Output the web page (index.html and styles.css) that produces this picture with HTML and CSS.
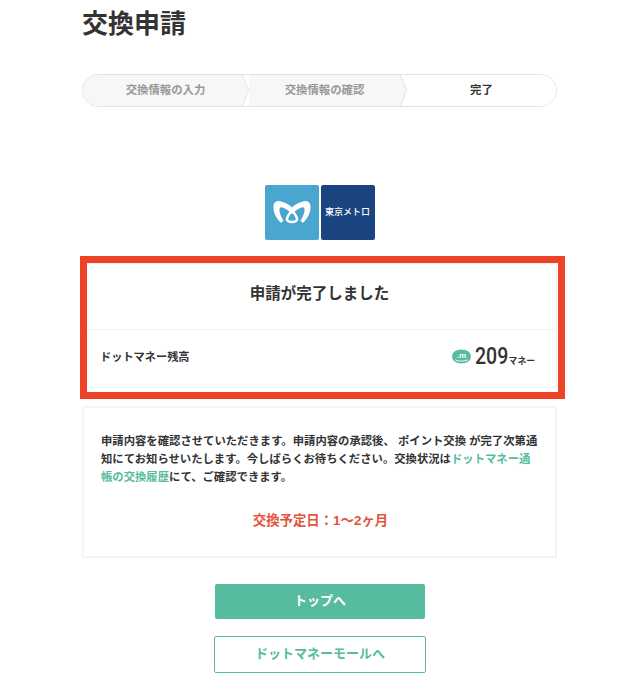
FILE: index.html
```html
<!doctype html>
<html>
<head>
<meta charset="utf-8">
<title>交換申請</title>
<link rel="stylesheet" href="styles.css">
</head>
<body>
<div id="wrap">
	<h1>交換申請</h1>
	<div class="steps">
		<div class="step step_first">交換情報の入力</div>
		<svg class="step_arrow" width="7" height="31" viewBox="0 0 7 31"><polygon points="0,-1 6.5,15.5 0,32" fill="#f7f7f7"/><polyline points="0,-1 6.5,15.500 0,32" fill="none" stroke="#e2e2e2"/></svg>
		<div class="step">交換情報の確認</div>
		<svg class="step_arrow" width="7" height="31" viewBox="0 0 7 31"><polygon points="0,-1 6.5,15.5 0,32" fill="#f7f7f7"/><polyline points="0,-1 6.5,15.500 0,32" fill="none" stroke="#e2e2e2"/></svg>
		<div class="step step_now">完了</div>
	</div>
	<div class="logos">
		<div class="logo logo_mark">
			<svg width="54" height="55" viewBox="0 0 54 55">
				<path d="M16 38C11 33 8 27 8.500 21C8.800 17 11.500 15.500 15 16.200C20 17.200 24.500 19.500 27 22.500C29.500 19.500 34 17.200 39 16.200C42.500 15.500 45.200 17 45.500 21C46 27 43 33 38 38L35.500 35.500C38 32 40 27 39.500 24C39.300 22.500 38 22 36.500 22.500C33.500 23.500 31 25 27 29C23 25 20.500 23.500 17.500 22.500C16 22 14.700 22.500 14.500 24C14 27 16 32 18.500 35.500Z" fill="#fff"/>
				<path d="M27 25.500C24 29 21.500 32 22 34.500C22.500 36.500 25 37 27 37C29 37 31.500 36.500 32 34.500C32.500 32 30 29 27 25.500Z" fill="none" stroke="#fff" stroke-width="2.600"/>
			</svg>
		</div>
		<div class="logo logo_name">東京メトロ</div>
	</div>
	<div class="result">
		<div class="result_title">申請が完了しました</div>
		<div class="result_row">
			<span class="result_label">ドットマネー残高</span>
			<span class="balance">
				<svg class="coin" width="19" height="15" viewBox="0 0 19 15">
					<ellipse cx="9.500" cy="8.500" rx="9.300" ry="6" fill="#57bb9f"/>
					<ellipse cx="9.500" cy="6.500" rx="9.300" ry="6" fill="#57bb9f"/>
					<path d="M3 10.800C7 12.600 12 12.600 16 10.800" fill="none" stroke="#fff" stroke-width="0.900"/>
					<text x="9.500" y="9" text-anchor="middle" class="coin_text">.m</text>
				</svg>
				<span class="balance_num">209</span><span class="balance_unit">マネー</span>
			</span>
		</div>
		<div class="marker"></div>
	</div>
	<div class="notice">
		<p>申請内容を確認させていただきます。申請内容の承認後、 ポイント交換 が完了次第通知にてお知らせいたします。今しばらくお待ちください。交換状況は<a href="#">ドットマネー通帳の交換履歴</a>にて、ご確認できます。</p>
		<p class="notice_date">交換予定日：1〜2ヶ月</p>
	</div>
	<a href="#" class="btn btn_main">トップへ</a>
	<a href="#" class="btn btn_sub">ドットマネーモールへ</a>
</div>
</body>
</html>
```

FILE: styles.css
```css
body,h1,p{margin: 0; padding: 0;}
html,body{background-color: #fff;}
body{
	font-family: "Liberation Sans","Noto Sans CJK JP",sans-serif;
	font-weight: 700;
	color: #333;
}
a{text-decoration: none;}
#wrap{
	width: 475px;
	margin-left: 82px;
	padding-bottom: 20px;
}
h1{
	font-size: 26px;
	line-height: 48px;
	font-weight: 700;
}
.steps{
	display: flex;
	height: 31px;
	margin-top: 26px;
	border: 1px solid #e2e2e2;
	border-radius: 17px;
	overflow: hidden;
	margin-bottom: 78px;
}
.step{
	flex: 0 0 151px;
	background-color: #f7f7f7;
	color: #999;
	font-size: 11.400px;
	line-height: 30px;
	text-align: center;
}
.step_first{
	flex-basis: 153px;
	padding-left: 6px;
}
.step_now{
	flex: 1;
	background-color: #fff;
	color: #333;
}
.step_arrow{
	flex: 0 0 7px;
	display: block;
}
.logos{
	display: flex;
	justify-content: center;
	gap: 2px;
	margin-bottom: 23px;
}
.logo{
	width: 54px;
	height: 55px;
	border-radius: 2px;
}
.logo_mark{background-color: #4aa6cf;}
.logo_name{
	background-color: #1b4581;
	color: #fff;
	font-size: 9px;
	font-weight: 500;
	line-height: 55px;
	text-align: center;
	white-space: nowrap;
}
.result{
	position: relative;
	border: 1px solid #f0f0f0;
}
.result_title{
	height: 65px;
	font-size: 15.500px;
	line-height: 60px;
	text-align: center;
	border-bottom: 1px solid #f0f0f0;
}
.result_row{
	display: flex;
	justify-content: space-between;
	align-items: center;
	height: 57px;
	padding: 0 21px 5px 17px;
	box-sizing: border-box;
}
.result_label{font-size: 11.200px;}
.balance{
	display: flex;
	align-items: baseline;
}
.coin{
	align-self: center;
	margin-right: 4px;
}
.coin_text{
	font-family: "Liberation Sans",sans-serif;
	font-size: 8px;
	font-weight: 700;
	fill: #fff;
}
.balance_num{
	display: inline-block;
	width: 33px;
	font-family: "Roboto",sans-serif;
	font-size: 23px;
	font-weight: 500;
	transform: scaleX(0.85);
	transform-origin: left;
	white-space: nowrap;
}
.balance_unit{
	font-size: 8.800px;
	margin-left: 1px;
}
.marker{
	position: absolute;
	left: -3px;
	top: -8px;
	width: 485px;
	height: 143px;
	box-sizing: border-box;
	border: 7px solid #ee4326;
}
.notice{
	margin-top: 18px;
	padding: 24px 15px 0 17px;
	height: 152px;
	box-sizing: border-box;
	border: 2px solid #f5f5f5;
	font-size: 11.350px;
	line-height: 18px;
}
.notice a{color: #57bb9f;}
.notice_date{
	margin-top: 26px;
	color: #e5533d;
	font-size: 13.400px;
	text-align: center;
}
.btn{
	display: block;
	box-sizing: border-box;
	border-radius: 2px;
	font-size: 13px;
	text-align: center;
}
.btn_main{
	width: 210px;
	height: 35px;
	margin: 26px 0 0 133px;
	background-color: #57bb9f;
	color: #fff;
	line-height: 33px;
}
.btn_sub{
	width: 212px;
	height: 37px;
	margin: 17px 0 0 132px;
	border: 1px solid #57bb9f;
	color: #57bb9f;
	line-height: 33px;
}
```
